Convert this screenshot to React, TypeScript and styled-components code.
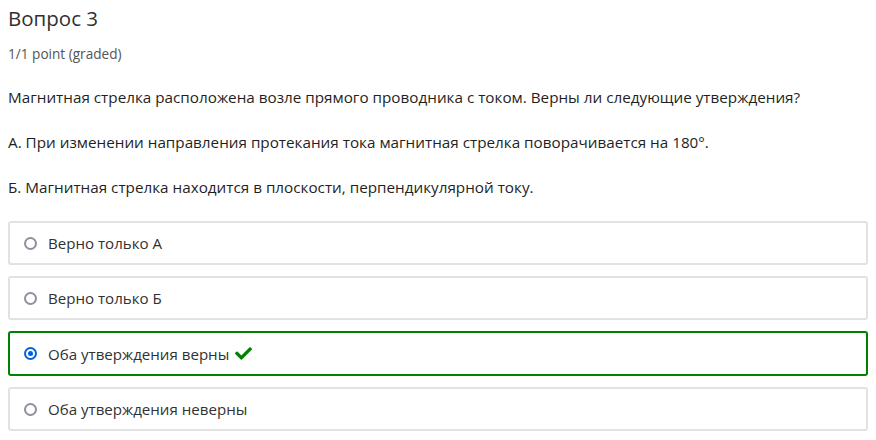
import React from "react";
import styled, { createGlobalStyle } from "styled-components";
import { FaCheck } from "react-icons/fa";

const GlobalStyle = createGlobalStyle`
    body {
        margin: 0;
        background: #fff;
        font-family: "Open Sans", "DejaVu Sans", sans-serif;
        color: #313131;
    }
`;

const Problem = styled.div`
    padding: 0 8px;
`;

const Title = styled.h3`
    margin: 0;
    padding-top: 5px;
    font-size: 20.5px;
    font-weight: 400;
    line-height: 26px;
    color: #313131;
`;

const Points = styled.div`
    margin-top: 15px;
    font-size: 13.6px;
    line-height: 16px;
    color: #555;
`;

const Paragraph = styled.p`
    margin: 0;
    margin-top: 26px;
    font-size: 15.25px;
    line-height: 19px;
    color: #1f1f1f;
`;

const Choices = styled.div`
    display: flex;
    flex-direction: column;
    gap: 11px;
    margin-top: 24px;
`;

const Choice = styled.label<{ $correct?: boolean }>`
    display: flex;
    align-items: center;
    height: ${(p) => (p.$correct ? "45px" : "44px")};
    box-sizing: border-box;
    padding-left: 14px;
    border: 2px solid ${(p) => (p.$correct ? "#008100" : "#e2e2e2")};
    border-radius: 3px;
    font-size: 15.1px;
    color: #313131;
`;

const Radio = styled.span<{ $checked?: boolean }>`
    display: flex;
    align-items: center;
    justify-content: center;
    flex: none;
    width: 13px;
    height: 13px;
    box-sizing: border-box;
    margin-right: 11px;
    border-radius: 50%;
    border: 2px solid ${(p) => (p.$checked ? "#0060df" : "#8f8f9d")};

    &::after {
        content: "";
        display: ${(p) => (p.$checked ? "block" : "none")};
        width: 5px;
        height: 5px;
        border-radius: 50%;
        background: #0060df;
    }
`;

const Check = styled(FaCheck)`
    color: #008100;
    font-size: 17px;
    margin-left: 6px;
`;

const options = [
    "Верно только А",
    "Верно только Б",
    "Оба утверждения верны",
    "Оба утверждения неверны",
];

export default function App() {
    return (
        <>
            <GlobalStyle />
            <Problem>
                <Title>Вопрос 3</Title>
                <Points>1/1 point (graded)</Points>
                <Paragraph>
                    Магнитная стрелка расположена возле прямого проводника с током. Верны ли следующие утверждения?
                </Paragraph>
                <Paragraph>
                    А. При изменении направления протекания тока магнитная стрелка поворачивается на 180°.
                </Paragraph>
                <Paragraph>
                    Б. Магнитная стрелка находится в плоскости, перпендикулярной току.
                </Paragraph>
                <Choices>
                    {options.map((o, i) => (
                        <Choice key={o} $correct={i === 2}>
                            <Radio $checked={i === 2} />
                            <span>{o}</span>
                            {i === 2 && <Check />}
                        </Choice>
                    ))}
                </Choices>
            </Problem>
        </>
    );
}
